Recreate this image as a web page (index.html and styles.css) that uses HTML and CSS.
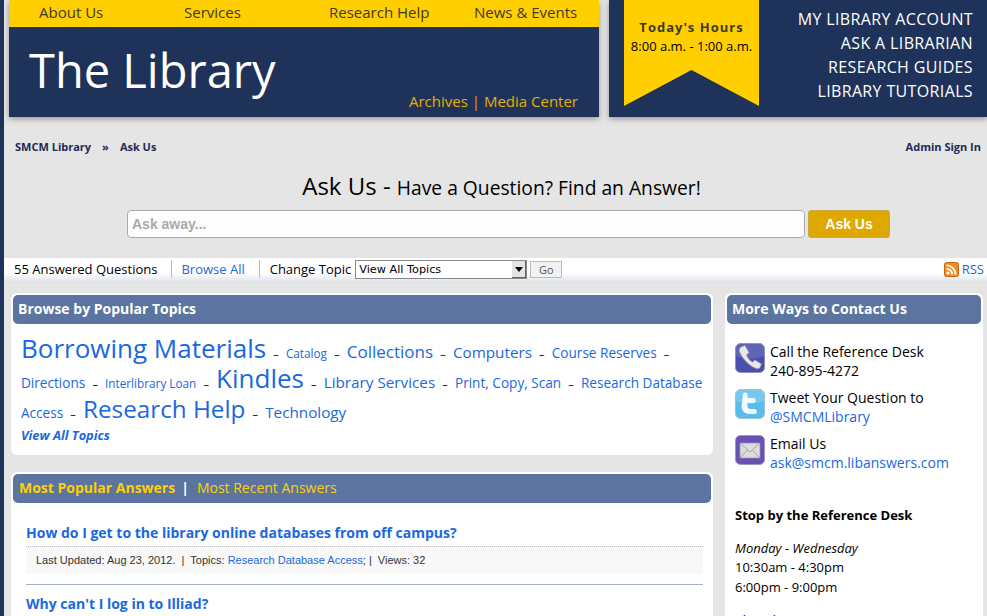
FILE: index.html
```html
<!DOCTYPE html>
<html lang="en">
  <head>
    <meta charset="UTF-8" />
    <title>Ask Us - The Library</title>
    <link rel="stylesheet" href="styles.css">
  </head>
  <body>
    <div class="page">
      <header class="masthead">
        <div class="brand">
          <nav class="main-nav">
            <a href="#">About Us</a>
            <a href="#">Services</a>
            <a href="#">Research Help</a>
            <a href="#">News &amp; Events</a>
          </nav>
          <div class="brand-body">
            <div class="site-title">The Library</div>
            <div class="brand-links"><a href="#">Archives</a> | <a href="#">Media Center</a></div>
          </div>
        </div>
        <div class="quick">
          <div class="ribbon">
            <div class="ribbon-title">Today's Hours</div>
            <div class="ribbon-hours">8:00 a.m. - 1:00 a.m.</div>
          </div>
          <ul class="quick-links">
            <li><a href="#">MY LIBRARY ACCOUNT</a></li>
            <li><a href="#">ASK A LIBRARIAN</a></li>
            <li><a href="#">RESEARCH GUIDES</a></li>
            <li><a href="#">LIBRARY TUTORIALS</a></li>
          </ul>
        </div>
      </header>

      <div class="crumbs">
        <div><a href="#">SMCM Library</a><span class="crumb-sep">»</span><a href="#">Ask Us</a></div>
        <a href="#">Admin Sign In</a>
      </div>

      <h1 class="ask-title">Ask Us - <small>Have a Question? Find an Answer!</small></h1>

      <form class="ask-form">
        <input class="ask-input" type="text" placeholder="Ask away..." />
        <button class="ask-btn" type="button">Ask Us</button>
      </form>

      <div class="toolbar">
        <span class="tool">55 Answered Questions</span>
        <a class="tool" href="#">Browse All</a>
        <span class="tool tool-topic">
          Change Topic
          <span class="fake-select">View All Topics<span class="fake-arrow"></span></span>
          <span class="go-btn">Go</span>
        </span>
        <a class="rss" href="#">
          <svg width="15" height="15" viewBox="0 0 15 15">
            <rect x="0.5" y="0.5" width="14" height="14" rx="2" fill="#f08a24" stroke="#c9660f" />
            <circle cx="4" cy="11" r="1.6" fill="#fff" />
            <path d="M2.5 6.8a5.7 5.7 0 0 1 5.7 5.7M2.5 3.4a9.1 9.1 0 0 1 9.1 9.1" fill="none" stroke="#fff" stroke-width="1.8" />
          </svg>
          RSS
        </a>
      </div>

      <div class="columns">
        <main class="main-col">
          <section class="panel">
            <h2 class="panel-head">Browse by Popular Topics</h2>
            <div class="cloud">
              <a class="t-xl" href="#">Borrowing Materials</a> <i>–</i>
              <a class="t-s" href="#">Catalog</a> <i>–</i>
              <a class="t-ml" href="#">Collections</a> <i>–</i>
              <a class="t-m" href="#">Computers</a> <i>–</i>
              <a class="t-sm" href="#">Course Reserves</a> <i>–</i>
              <a class="t-sm" href="#">Directions</a> <i>–</i>
              <a class="t-s" href="#">Interlibrary Loan</a> <i>–</i>
              <a class="t-xl" href="#">Kindles</a> <i>–</i>
              <a class="t-m" href="#">Library Services</a> <i>–</i>
              <a class="t-sm" href="#">Print, Copy, Scan</a> <i>–</i>
              <a class="t-sm" href="#">Research Database Access</a> <i>–</i>
              <a class="t-l" href="#">Research Help</a> <i>–</i>
              <a class="t-m" href="#">Technology</a>
              <a class="all-topics" href="#">View All Topics</a>
            </div>
          </section>

          <section class="panel">
            <h2 class="panel-head panel-tabs"><a class="tab-on" href="#">Most Popular Answers</a><span class="tab-sep">|</span><a href="#">Most Recent Answers</a></h2>
            <div class="answers">
              <article class="answer">
                <a class="answer-q" href="#">How do I get to the library online databases from off campus?</a>
                <div class="answer-meta">Last Updated: Aug 23, 2012. &nbsp;|&nbsp; Topics: <a href="#">Research Database Access</a>; | &nbsp;Views: 32</div>
              </article>
              <article class="answer">
                <a class="answer-q" href="#">Why can't I log in to Illiad?</a>
              </article>
            </div>
          </section>
        </main>

        <aside class="panel side-col">
          <h2 class="panel-head">More Ways to Contact Us</h2>
          <div class="contact">
            <div class="contact-row">
              <svg class="contact-icon" viewBox="0 0 30 30">
                <rect x="0.5" y="0.5" width="29" height="29" rx="5" fill="#4a4fae" stroke="#8f93b8" />
                <path d="M1 1h28v12C18 17 9 16 1 13z" fill="#fff" opacity=".12" />
                <path d="M6 4l4-1.5 4 7-2.5 2.5c1 3 3 5.500 6 7l2.500-2 6.500 4-1.500 3.500c-1 1.500-3 1.500-5 .5C13 22 7 15 4.500 8.500 4 6.500 4.500 5 6 4z" fill="#e8e8e8" stroke="#9a9a9a" stroke-width=".8" />
              </svg>
              <div>Call the Reference Desk<br>240-895-4272</div>
            </div>
            <div class="contact-row">
              <svg class="contact-icon" viewBox="0 0 30 30">
                <rect x="0.5" y="0.5" width="29" height="29" rx="5" fill="#58bde9" stroke="#9cc4d6" />
                <path d="M1 1h28v11C18 16 9 15 1 12z" fill="#fff" opacity=".18" />
                <path d="M8 5c0-2 4-2 4.500 0v4h6c3 0 3 5 0 5h-6v3c0 2 1.500 3 3 3h4c3 0 3 5 0 5h-5c-4.500 0-8-3-8-8z" fill="#eefaff" />
              </svg>
              <div>Tweet Your Question to<br><a href="#">@SMCMLibrary</a></div>
            </div>
            <div class="contact-row">
              <svg class="contact-icon" viewBox="0 0 30 30">
                <rect x="0.5" y="0.5" width="29" height="29" rx="5" fill="#6a4fb5" stroke="#a296c4" />
                <rect x="5" y="8" width="20" height="15" fill="#dcdcdc" stroke="#999" stroke-width=".7" />
                <path d="M5 8l10 9 10-9M5 23l7.500-8M25 23l-7.500-8" fill="none" stroke="#999" stroke-width=".8" />
              </svg>
              <div>Email Us<br><a href="#">ask@smcm.libanswers.com</a></div>
            </div>
            <h3 class="desk-title">Stop by the Reference Desk</h3>
            <p class="desk-hours"><em>Monday - Wednesday</em><br>10:30am - 4:30pm<br>6:00pm - 9:00pm</p>
            <p class="desk-hours"><em>Thursday</em><br>10:30am - 4:30pm</p>
          </div>
        </aside>
      </div>
    </div>
  </body>
</html>
```

FILE: styles.css
```css
* {
  box-sizing: border-box;
}
html,
body {
  margin: 0;
  height: 616px;
  overflow: hidden;
}
body {
  font-family: "Open Sans", sans-serif;
  font-size: 14px;
  color: #000;
  background-color: #e5e5e5;
}
a {
  color: #1a68e0;
  text-decoration: none;
}
.page {
  height: 616px;
  overflow: hidden;
  border-left: 4px solid #1f3259;
}

/* header */
.masthead {
  display: flex;
  gap: 10px;
  padding-left: 5px;
}
.brand {
  width: 590px;
  height: 117px;
  box-shadow: 0 2px 6px rgba(0, 0, 0, 0.35);
  background-color: #1f3259;
}
.main-nav {
  display: grid;
  grid-template-columns: 145px 145px 145px auto;
  height: 27px;
  padding-left: 30px;
  background-color: #ffcf00;
  font-size: 15px;
  line-height: 25px;
}
.main-nav a {
  color: #3d3a2a;
}
.brand-body {
  display: flex;
  justify-content: space-between;
  height: 90px;
  padding: 0 21px 0 20px;
}
.site-title {
  font-size: 47px;
  line-height: 86px;
  color: #fff;
}
.brand-links {
  align-self: flex-end;
  padding-bottom: 5px;
  font-size: 15px;
  line-height: 22px;
  color: #dea800;
}
.brand-links a {
  color: #e6ae00;
}
.quick {
  display: flex;
  justify-content: space-between;
  width: 378px;
  height: 117px;
  padding: 0 14px 0 15px;
  background-color: #1f3259;
  box-shadow: 0 2px 6px rgba(0, 0, 0, 0.35);
}
.ribbon {
  width: 135px;
  height: 106px;
  padding-top: 18px;
  background-color: #ffcf00;
  clip-path: polygon(0 0, 100% 0, 100% 100%, 50% 66%, 0 100%);
  text-align: center;
  font-size: 13px;
  line-height: 19px;
}
.ribbon-title {
  font-weight: 700;
  letter-spacing: 1px;
  color: #3d3a2a;
}
.quick-links {
  margin: 0;
  padding: 7px 0 0;
  list-style: none;
  text-align: right;
  font-size: 16px;
  line-height: 24px;
  letter-spacing: 0.36px;
}
.quick-links a {
  color: #fff;
}

/* breadcrumb + search */
.crumbs {
  display: flex;
  justify-content: space-between;
  padding: 21px 6px 0 11px;
  font-size: 11px;
  line-height: 17px;
  font-weight: 700;
}
.crumbs a {
  color: #1f2a55;
}
.crumb-sep {
  margin: 0 11px;
  color: #1f2a55;
}
.ask-title {
  margin: 13px 0 0;
  padding-left: 12px;
  text-align: center;
  font-size: 24px;
  font-weight: 400;
  line-height: 36px;
}
.ask-title small {
  font-size: 19.25px;
}
.ask-form {
  display: flex;
  gap: 3px;
  margin-top: 4px;
  padding-left: 123px;
}
.ask-input {
  width: 678px;
  height: 28px;
  padding: 0 4px;
  border: 1px solid #aaa;
  border-radius: 4px;
  background-color: #fdfdfd;
  font-family: "Liberation Sans", sans-serif;
  font-size: 14px;
  font-weight: 700;
}
.ask-input::placeholder {
  color: #aaa;
  opacity: 1;
}
.ask-btn {
  width: 82px;
  height: 28px;
  border: 1px solid #c9a848;
  border-radius: 3px;
  background-color: #dea800;
  color: #fff;
  font-family: "Liberation Sans", sans-serif;
  font-size: 14px;
  font-weight: 700;
}

/* toolbar */
.toolbar {
  display: flex;
  align-items: center;
  height: 25px;
  margin-top: 20px;
  padding: 0 3px 3px 10px;
  background: linear-gradient(#fff 60%, #dfe1e8);
  font-size: 13px;
}
.tool {
  padding: 0 14px 0 0;
  margin-right: 10px;
  line-height: 18px;
  border-right: 1px solid #bbb;
}
a.tool {
  margin-left: -1px;
}
.tool-topic {
  display: flex;
  align-items: center;
  gap: 3px;
  padding: 0;
  margin-right: 0;
  border: 0;
}
.fake-select {
  display: flex;
  align-items: center;
  justify-content: space-between;
  width: 172px;
  height: 19px;
  margin-left: 1px;
  padding: 2px 0 0 3px;
  border: 1px solid #888;
  background-color: #fff;
  font-family: "DejaVu Sans", sans-serif;
  font-size: 11.25px;
}
.fake-arrow {
  position: relative;
  width: 14px;
  height: 17px;
  margin-top: -2px;
  background-color: #e4e4e4;
  box-shadow: inset -1px -1px 0 #666;
}
.fake-arrow::after {
  content: "";
  position: absolute;
  left: 3px;
  top: 6px;
  border: 4px solid transparent;
  border-top: 5px solid #000;
  border-bottom: 0;
}
.go-btn {
  width: 32px;
  height: 17px;
  border: 1px solid #bbb;
  background-color: #f2f2f2;
  color: #555;
  font-size: 11px;
  line-height: 15px;
  text-align: center;
}
.rss {
  display: flex;
  align-items: center;
  gap: 3px;
  margin-left: auto;
  font-size: 13px;
}

/* columns */
.columns {
  display: flex;
  align-items: flex-start;
  gap: 12px;
  padding: 10px 0 0 7px;
}
.main-col {
  display: flex;
  flex-direction: column;
  gap: 17px;
  width: 702px;
}
.panel {
  padding: 2px;
  background-color: #fff;
  border-radius: 6px;
}
.panel-head {
  height: 29px;
  margin: 0;
  padding-left: 5px;
  border-radius: 5px;
  background-color: #5b74a0;
  color: #fff;
  font-size: 14px;
  font-weight: 700;
  line-height: 28px;
}
.cloud {
  height: 129px;
  padding: 14px 8px 0;
  line-height: 30px;
  font-size: 14px;
}
.cloud a,
.cloud i {
  line-height: 0;
}
.cloud i {
  margin: 0 3.5px;
  font-style: normal;
  font-size: 11px;
}
.t-s { font-size: 11.75px; }
.t-sm { font-size: 13.6px; }
.t-m { font-size: 15.25px; }
.t-ml { font-size: 17px; }
.t-l { font-size: 24.25px; }
.t-xl { font-size: 26px; }
.cloud .all-topics {
  display: block;
  margin-top: -3px;
  font-size: 12.8px;
  font-weight: 700;
  font-style: italic;
  line-height: 20px;
}
.panel-tabs {
  padding-left: 6px;
  color: #ffcf00;
  line-height: 27px;
}
.panel-tabs a {
  color: #ffcf00;
  font-weight: 400;
}
.panel-tabs .tab-on {
  font-weight: 700;
}
.tab-sep {
  margin: 0 8px 0 6px;
  color: #fff;
}
.answers {
  padding: 18px 8px 40px 13px;
}
.answer-q {
  display: block;
  font-size: 14px;
  font-weight: 700;
  line-height: 24px;
}
.answer-meta {
  margin-top: 1px;
  height: 28px;
  padding-left: 10px;
  border-top: 1px dotted #bbb;
  background-color: #f8f8f8;
  font-family: "Liberation Sans", sans-serif;
  font-size: 11px;
  line-height: 26px;
  color: #333;
}
.answer + .answer {
  margin-top: 10px;
  padding-top: 7px;
  border-top: 1px solid #a3aecb;
}
.side-col {
  width: 258px;
}
.contact {
  padding: 18px 8px 0;
  line-height: 19px;
}
.contact-row {
  display: flex;
  gap: 5px;
  margin-bottom: 8px;
}
.contact-icon {
  flex: none;
  width: 30px;
  height: 30px;
  margin-top: 1px;
}
.desk-title {
  margin: 33px 0 0;
  font-size: 13px;
  font-weight: 700;
  line-height: 20px;
}
.desk-hours {
  margin: 13.5px 0 0;
  font-size: 13px;
  line-height: 19.5px;
}
```
